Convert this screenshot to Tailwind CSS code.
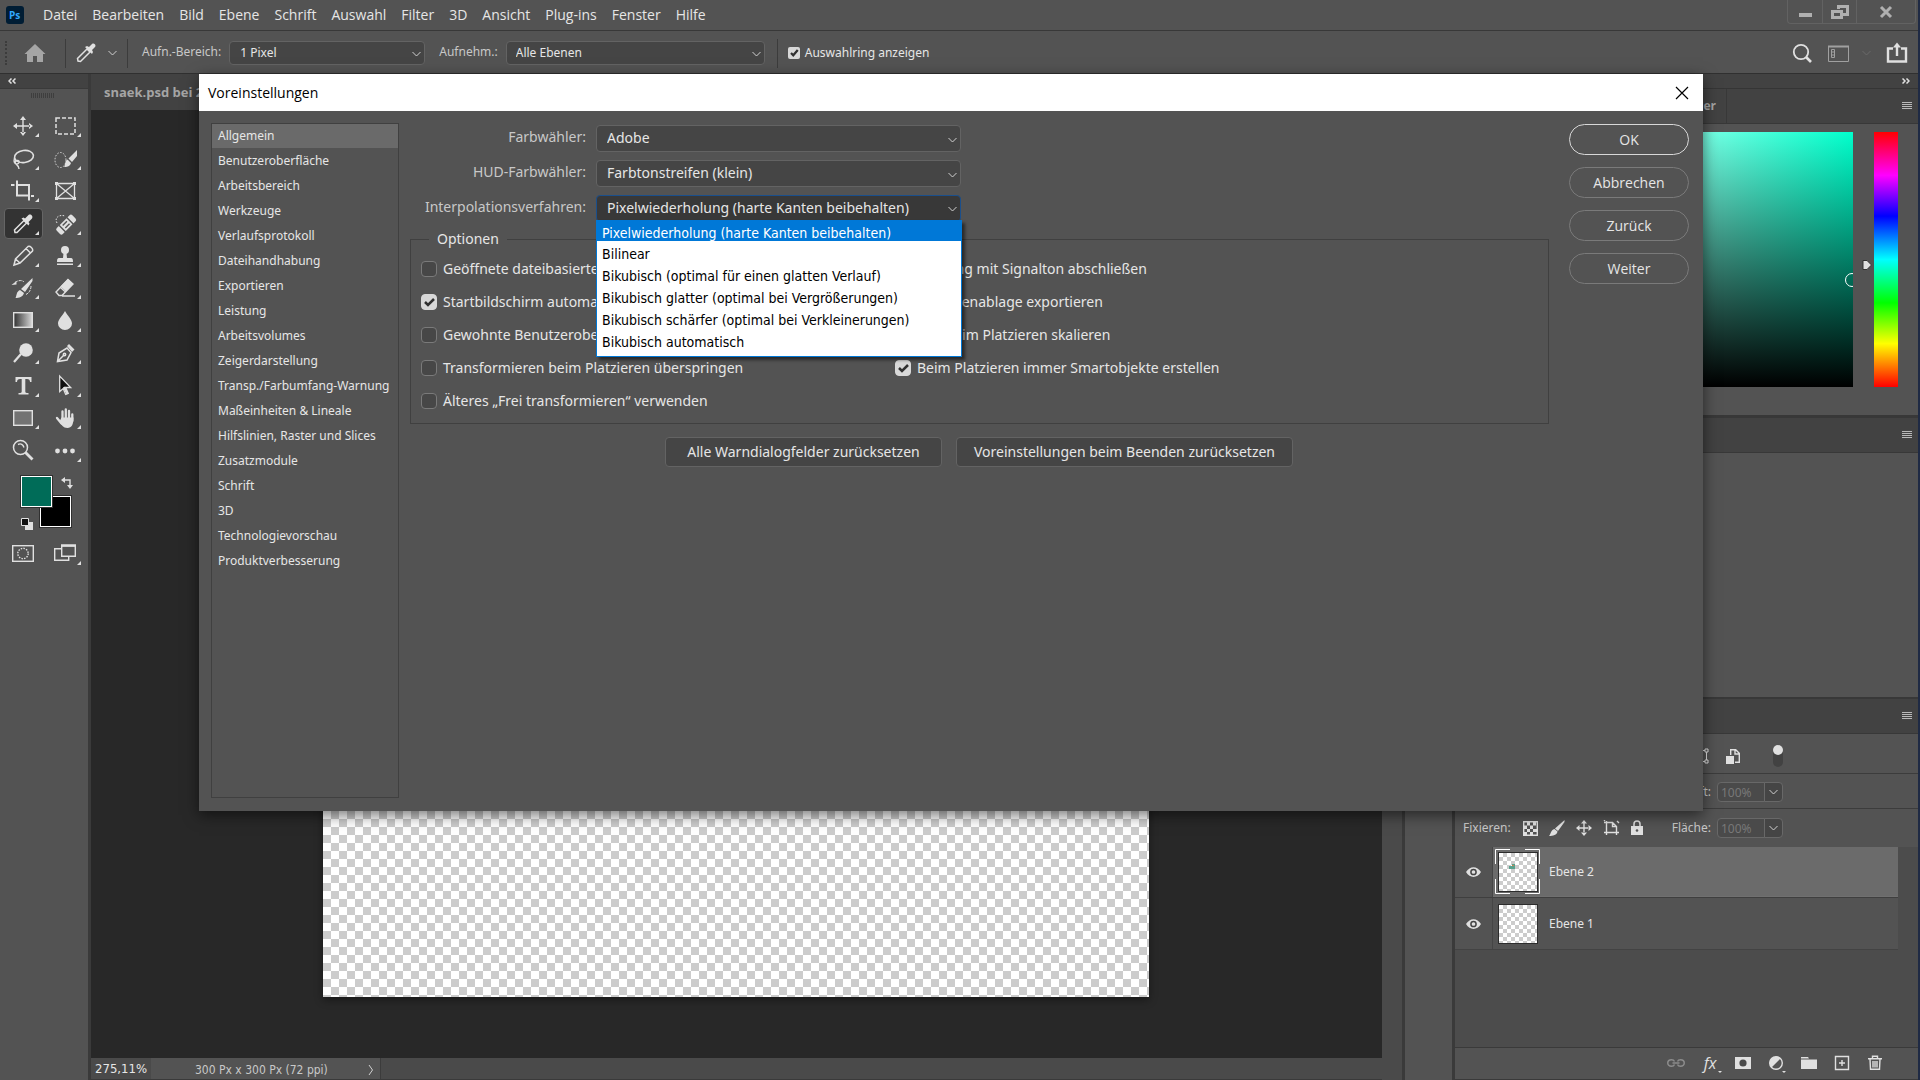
<!DOCTYPE html>
<html lang="de">

<head>
    <meta charset="utf-8">
    <title>Voreinstellungen</title>
    <script src="https://cdn.jsdelivr.net/npm/@tailwindcss/browser@4"></script>
</head>

<body class="relative flex h-screen flex-col overflow-hidden border-r-2 border-[#1f2a44] bg-[#535353] font-['Noto_Sans',sans-serif] text-xs text-[#e6e6e6]">

    <!-- menu bar -->
    <header class="flex h-[31px] shrink-0 items-center justify-between border-b border-[#383838]">
        <nav class="flex h-full items-center gap-[15px] pl-[6px] font-['Open_Sans',sans-serif] text-sm">
            <svg class="mr-1 h-[18px] w-[18px]" viewBox="0 0 18 18">
                <rect width="18" height="18" rx="3" fill="#001d34" />
                <text x="3" y="13" font-size="10" font-weight="bold" fill="#31a8ff" font-family="Open Sans">Ps</text>
            </svg>
            <a href="#">Datei</a>
            <a href="#">Bearbeiten</a>
            <a href="#">Bild</a>
            <a href="#">Ebene</a>
            <a href="#">Schrift</a>
            <a href="#">Auswahl</a>
            <a href="#">Filter</a>
            <a href="#">3D</a>
            <a href="#">Ansicht</a>
            <a href="#">Plug-ins</a>
            <a href="#">Fenster</a>
            <a href="#">Hilfe</a>
        </nav>
        <div class="mr-[2px] flex h-6 self-start rounded-b border border-t-0 border-[#626262] text-[#b0b0b0]">
            <button class="flex w-[35px] items-center justify-center border-r border-[#626262]" aria-label="Minimieren">
                <svg class="h-4 w-4" viewBox="0 0 16 16"><path d="M2 9h13v4H2z" fill="currentColor" /></svg>
            </button>
            <button class="flex w-[34px] items-center justify-center border-r border-[#626262]" aria-label="Verkleinern">
                <svg class="h-[18px] w-[18px]" viewBox="0 0 18 18" fill="none" stroke="currentColor" stroke-width="3"><path d="M7.500 6V3.500h9v8H12M1.500 8.500h9v6h-9z" /></svg>
            </button>
            <button class="flex w-[58px] items-center justify-center" aria-label="Beenden">
                <svg class="h-[14px] w-[14px]" viewBox="0 0 14 14" stroke="currentColor" stroke-width="3"><path d="M2 2l10 10M12 2L2 12" /></svg>
            </button>
        </div>
    </header>

    <!-- tool options -->
    <div class="flex h-[43px] shrink-0 items-center border-b border-[#303030] pt-[2px]">
        <div class="ml-[5px] h-[24px] border-l-2 border-dotted border-[#3c3c3c]"></div>
        <button class="ml-[17px]" aria-label="Startseite">
            <svg class="h-5 w-[22px]" viewBox="0 0 22 20" fill="#a5a5a5"><path d="M11 1L.500 11H3v8h6v-6h4v6h6v-8h2.500z" /></svg>
        </button>
        <div class="ml-[19px] h-[29px] border-l border-[#3c3c3c]"></div>
        <button class="ml-[10px]" aria-label="Pipette">
            <svg class="h-5 w-5" viewBox="0 0 20 20"><path d="M2 18l-.500-2.500L11 6l3 3-9.500 9.500z" fill="none" stroke="#e0e0e0" stroke-width="1.500" /><path d="M9 4l2-1 2 1 3-3c2-1.500 4.500 1 3 3l-3 3 1 2-1 2z" fill="#e0e0e0" /></svg>
        </button>
        <svg class="ml-3 h-[6px] w-[9px]" viewBox="0 0 9 6" fill="none" stroke="#d0d0d0"><path d="M.5 1l4 4 4-4" /></svg>
        <div class="ml-[10px] h-[29px] border-l border-[#3c3c3c]"></div>
        <label for="area" class="ml-[14px] pb-[3px] text-[#c8c8c8]">Aufn.-Bereich:</label>
        <div class="relative ml-2">
            <select id="area" class="h-6 w-[196px] appearance-none rounded-sm border border-[#636363] bg-[#454545] pl-[10px]">
                <option>1 Pixel</option>
            </select>
            <svg class="pointer-events-none absolute top-[10px] right-1 h-[6px] w-[9px]" viewBox="0 0 9 6" fill="none" stroke="#d0d0d0"><path d="M.5 1l4 4 4-4" /></svg>
        </div>
        <label for="sample" class="ml-[14px] pb-[3px] text-[#c8c8c8]">Aufnehm.:</label>
        <div class="relative ml-2">
            <select id="sample" class="h-6 w-[259px] appearance-none rounded-sm border border-[#636363] bg-[#454545] pl-[9px]">
                <option>Alle Ebenen</option>
            </select>
            <svg class="pointer-events-none absolute top-[10px] right-1 h-[6px] w-[9px]" viewBox="0 0 9 6" fill="none" stroke="#d0d0d0"><path d="M.5 1l4 4 4-4" /></svg>
        </div>
        <div class="ml-3 h-[29px] border-l border-[#3c3c3c]"></div>
        <label class="ml-[10px] flex items-center gap-[5px]">
            <span class="relative flex">
                <input type="checkbox" checked class="peer h-3 w-3 appearance-none rounded-xs bg-[#454545] checked:bg-[#d8d8d8]">
                <svg class="pointer-events-none absolute inset-0 hidden h-3 w-3 peer-checked:block" viewBox="0 0 16 16" fill="none" stroke="#303030" stroke-width="3"><path d="M4 8l3 3 6-7" /></svg>
            </span>
            Auswahlring anzeigen
        </label>
        <div class="mr-[10px] ml-auto flex items-center">
            <button aria-label="Suchen">
                <svg class="h-5 w-5" viewBox="0 0 20 20" fill="none" stroke="#e0e0e0"><circle cx="9" cy="9" r="7.200" stroke-width="1.800" /><path d="M14 14l5 5" stroke-width="2.600" /></svg>
            </button>
            <button class="ml-4" aria-label="Arbeitsbereich">
                <svg class="h-[17px] w-[21px]" viewBox="0 0 21 17" fill="none" stroke="#a0a0a0"><path d="M.5 1.500h20v15H.500z" /><path d="M0 1.500h21" stroke-width="2" /><path d="M3.500 4.500h3v8h-3zM3.500 7h3M3.500 10h3" /></svg>
            </button>
            <svg class="ml-[13px] h-[6px] w-[9px]" viewBox="0 0 9 6" fill="none" stroke="#6a6a6a"><path d="M.5 1l4 4 4-4" /></svg>
            <button class="ml-[15px]" aria-label="Teilen">
                <svg class="h-[22px] w-[22px]" viewBox="0 0 22 22" fill="none" stroke="#e0e0e0" stroke-width="2.400"><path d="M7 6.500H2v13h18v-13h-5M11 14V4" /><path d="M7 5.500L11 .500l4 5z" fill="#e0e0e0" stroke="none" /></svg>
            </button>
        </div>
    </div>

    <div class="flex min-h-0 flex-1">

        <!-- toolbox -->
        <aside class="flex w-[91px] shrink-0 flex-col border-r-[3px] border-[#3a3a3a]">
            <div class="flex h-[15px] shrink-0 items-center border-b border-[#3a3a3a] bg-[#424242] pl-2">
                <svg class="h-[6px] w-2" viewBox="0 0 8 6" fill="none" stroke="#e0e0e0" stroke-width="1.500"><path d="M3.500.5L1 3l2.500 2.500M7.500.5L5 3l2.500 2.500" /></svg>
            </div>
            <div class="mt-1 ml-[31px] h-[5px] w-6 bg-[repeating-linear-gradient(90deg,#3e3e3e_0_1px,#535353_1px_2px)]"></div>
            <div class="mt-3 grid h-[357px] w-[86px] shrink-0 grid-cols-[40px_40px] grid-rows-11 gap-x-[2px] pl-[3px] text-[#e0e0e0]">
                <button aria-label="Verschieben"><svg class="h-8 w-10" viewBox="0 0 40 32" fill="currentColor"><path d="M19.300 9h1.400v14h-1.400zM13 15.300h14v1.400H13zM20 6l3 4h-6zM20 26l3-4h-6zM10 16l4-3v6zM30 16l-4-3v6zM32 27h4v-4z" /></svg></button>
                <button aria-label="Auswahlrechteck"><svg class="h-8 w-10" viewBox="0 0 40 32" fill="none" stroke="currentColor"><rect x="11" y="8" width="19" height="16" stroke-width="1.500" stroke-dasharray="4 2" /><path d="M32 27h4v-4z" fill="currentColor" stroke="none" /></svg></button>
                <button aria-label="Lasso"><svg class="h-8 w-10" viewBox="0 0 40 32" fill="none" stroke="currentColor"><ellipse cx="21" cy="13.500" rx="9.500" ry="6" stroke-width="1.600" transform="rotate(-8 21 13.500)" /><path d="M11.500 15c-1 4 0 6 2.500 6s3-3 1-3.500-4 2-2 3.500 3 2 3 5" stroke-width="1.400" /><path d="M32 27h4v-4z" fill="currentColor" stroke="none" /></svg></button>
                <button aria-label="Schnellauswahl"><svg class="h-8 w-10" viewBox="0 0 40 32" fill="currentColor"><ellipse cx="15.500" cy="17" rx="5.500" ry="7.500" fill="none" stroke="currentColor" stroke-dasharray="1.500 1.500" /><path d="M32 7v6l-5 6-3.500-3.500zM22.500 16.500l3.500 3.500c-1 4-5 4-7 4 2-2 0-5 3.500-7.500zM32 27h4v-4z" /></svg></button>
                <button aria-label="Freistellen"><svg class="h-8 w-10" viewBox="0 0 40 32" fill="none" stroke="currentColor" stroke-width="2"><path d="M14 5.500v15h12M28 21h3M8 10h3.500M15 10h11v15.500" /><path d="M32 27h4v-4z" fill="currentColor" stroke="none" /></svg></button>
                <button aria-label="Rahmen"><svg class="h-8 w-10" viewBox="0 0 40 32" fill="none" stroke="currentColor" stroke-width="1.300"><path d="M11.500 8.500h18v15h-18zM11.500 8.500l18 15M29.500 8.500l-18 15" /><path d="M10 7h3v3h-3zM28 7h3v3h-3zM10 22h3v3h-3zM28 22h3v3h-3z" fill="currentColor" stroke="none" /></svg></button>
                <button aria-label="Pipette-Werkzeug" class="my-[1px] ml-[1px] flex w-[39px] items-center overflow-hidden rounded-sm border border-[#656565] bg-[#333333]"><svg class="-ml-[2px] h-8 w-10 shrink-0" viewBox="0 0 40 32"><path d="M12 24.500l-.500-2.500L21 12.500l2.500 2.500L14 24.500z" fill="none" stroke="#e0e0e0" stroke-width="1.500" /><path d="M18.500 10.500l2-1 1.500 1 3.500-3.500c2-1.500 5 1 3.500 3.500L25.500 14l1 1.500-1 2zM32 27h4v-4z" fill="#e0e0e0" /></svg></button>
                <button aria-label="Reparaturpinsel"><svg class="h-8 w-10" viewBox="0 0 40 32" fill="currentColor"><path d="M12 15c-3-5 2-9 8-7" fill="none" stroke="currentColor" stroke-dasharray="1.500 1.500" /><g transform="rotate(-45 21 16.500)"><rect x="10" y="12.500" width="22" height="8.500" rx="2" /><path d="M15.500 12v9.500M26.500 12v9.500M18 14.800h6M18 18.500h6" stroke="#535353" stroke-width="1.400" /></g><path d="M32 27h4v-4z" /></svg></button>
                <button aria-label="Buntstift"><svg class="h-8 w-10" viewBox="0 0 40 32" fill="none" stroke="currentColor" stroke-width="1.500"><path d="M11 25l1.500-6L25 6.500c2-1 5.500 2 4.500 4.500L17 23zM12.500 19l4.500 4M23 8.500l4.500 4.500" /><path d="M32 27h4v-4z" fill="currentColor" stroke="none" /></svg></button>
                <button aria-label="Kopierstempel"><svg class="h-8 w-10" viewBox="0 0 40 32" fill="currentColor"><circle cx="20" cy="10" r="4" /><path d="M18.500 13h3l.500 5h4c1.500 0 2 1 2 4H12c0-3 .500-4 2-4h4zM12 23.500h16V25H12zM32 27h4v-4z" /></svg></button>
                <button aria-label="Protokollpinsel"><svg class="h-8 w-10" viewBox="0 0 40 32" fill="currentColor"><path d="M29.500 6v3l-7.500 11-4-3zM17 18l4 3c-1 4-5 5-8.500 5 1.500-3 .500-6 4.500-8zM8.500 13l5-4v3.500zM32 27h4v-4z" /><path d="M12 10.500c4-3 8-2 9-.500M28 14c0 4-2 7-5 8.500" fill="none" stroke="currentColor" stroke-dasharray="3 1" /></svg></button>
                <button aria-label="Radiergummi"><svg class="h-8 w-10" viewBox="0 0 40 32" fill="currentColor"><path d="M23 7l5 5-7 7.500-5.500-5z" /><path d="M23 7.500l5 4.500L17 23.500h-3L11 20zM15 15l5.500 5M17 24h13" fill="none" stroke="currentColor" stroke-width="1.400" /><path d="M32 27h4v-4z" /></svg></button>
                <button aria-label="Verlauf"><svg class="h-8 w-10" viewBox="0 0 40 32" fill="currentColor"><defs><linearGradient id="grad"><stop stop-color="#303030" /><stop offset="1" stop-color="#d8d8d8" /></linearGradient></defs><rect x="10.700" y="7.700" width="18.600" height="14.600" fill="url(#grad)" stroke="currentColor" stroke-width="1.400" /><path d="M32 27h4v-4z" /></svg></button>
                <button aria-label="Weichzeichner"><svg class="h-8 w-10" viewBox="0 0 40 32" fill="currentColor"><path d="M20 6c3 5.500 7 8.500 7 12.500a7 6.500 0 0 1-14 0c0-4 4-7 7-12.500zM32 27h4v-4z" /></svg></button>
                <button aria-label="Abwedler"><svg class="h-8 w-10" viewBox="0 0 40 32" fill="currentColor"><circle cx="23" cy="13" r="6.800" /><path d="M18 17L11 25" stroke="currentColor" stroke-width="2.200" /><path d="M32 27h4v-4z" /></svg></button>
                <button aria-label="Zeichenstift"><svg class="h-8 w-10" viewBox="0 0 40 32" fill="none" stroke="currentColor" stroke-width="1.500"><path d="M12.500 24.500L14 16l8-5 4 4.500-4 7.500zM12.500 24.500l6-6" /><circle cx="19.500" cy="17.500" r="1.200" /><path d="M22 9l2-2 5.500 5.500-2.500 2.500zM32 27h4v-4z" fill="currentColor" stroke="none" /></svg></button>
                <button aria-label="Text"><svg class="h-8 w-10" viewBox="0 0 40 32" fill="currentColor"><path d="M12.500 7h16v5H27c0-2-1-3-3-3h-1.700v12.500c0 1 .700 1.500 3.200 1.500v1.500h-10V23c2.500 0 3.200-.500 3.200-1.500V9H17c-2 0-3 1-3 3h-1.500zM32 27h4v-4z" /></svg></button>
                <button aria-label="Pfadauswahl"><svg class="h-8 w-10" viewBox="0 0 40 32"><path d="M14.700 6v15.500l3.500-3 2.500 6 2.500-1-2.500-6h5z" fill="#101010" stroke="#e0e0e0" stroke-width="1.300" /><path d="M19 17l3.500 7" stroke="#e0e0e0" stroke-width="2.400" /><path d="M32 27h4v-4z" fill="#e0e0e0" /></svg></button>
                <button aria-label="Rechteck"><svg class="h-8 w-10" viewBox="0 0 40 32" fill="currentColor"><rect x="10.700" y="8.700" width="18.600" height="14.600" fill="#737373" stroke="currentColor" stroke-width="1.400" /><path d="M32 27h4v-4z" /></svg></button>
                <button aria-label="Hand"><svg class="h-8 w-10" viewBox="0 0 40 32"><path d="M17.500 17V9.500M20.800 16V7.500M24 17V9M27.300 19v-6.500M16.500 21.500L12 16" stroke="currentColor" stroke-width="2.300" stroke-linecap="round" /><path d="M16.500 15.500h12c0 7-2 10.500-6 10.500-4.500 0-6-3-8-6.500zM32 27h4v-4z" fill="currentColor" /></svg></button>
                <button aria-label="Zoom"><svg class="h-8 w-10" viewBox="0 0 40 32" fill="none" stroke="currentColor"><circle cx="17.500" cy="12.500" r="7" stroke-width="1.500" /><path d="M15 9.500c3-1.500 5 0 6 3" stroke-width="1.400" /><path d="M22.500 17.500l7 7" stroke-width="2.800" /></svg></button>
                <button aria-label="Symbolleiste bearbeiten"><svg class="h-8 w-10" viewBox="0 0 40 32" fill="currentColor"><circle cx="12.500" cy="16" r="2.400" /><circle cx="20" cy="16" r="2.400" /><circle cx="27.500" cy="16" r="2.400" /><path d="M32 27h4v-4z" /></svg></button>
            </div>
            <div class="relative mt-[8px] h-[56px] shrink-0">
                <button class="absolute top-[21px] left-[40px] h-[31px] w-[31px] border border-white bg-black outline outline-[#303030]" aria-label="Hintergrundfarbe"></button>
                <button class="absolute top-[1px] left-[21px] h-[31px] w-[31px] border border-white bg-[#006c58] outline outline-[#303030]" aria-label="Vordergrundfarbe"></button>
                <svg class="absolute top-[2px] left-[61px] h-3 w-3" viewBox="0 0 12 12" fill="#e0e0e0"><path d="M0 3l4-3v6zM6 8h6l-3 4zM3 2.300h6.700V9H8.300V3.700H3z" /></svg>
                <svg class="absolute top-[43px] left-[21px] h-3 w-3" viewBox="0 0 12 12"><path d="M4 4h8v8H4z" fill="#e0e0e0" /><path d="M.5.500h7v7h-7z" fill="#111" stroke="#e0e0e0" /></svg>
            </div>
            <div class="mt-[7px] flex gap-[2px] pl-[3px] text-[#e0e0e0]">
                <button aria-label="Maskierungsmodus"><svg class="h-8 w-10" viewBox="0 0 40 32" fill="none" stroke="currentColor"><rect x="9.700" y="7.700" width="20.600" height="15.600" stroke-width="1.400" /><circle cx="20" cy="15.500" r="5.200" stroke-width="1.400" stroke-dasharray="1.500 1.200" /></svg></button>
                <button aria-label="Bildschirmmodus"><svg class="h-8 w-10" viewBox="0 0 40 32" fill="none" stroke="currentColor" stroke-width="1.400"><path d="M16 10.700H9.700v11.600h14V19" /><path d="M16.700 7.700h13.600v10.600H16.700z" /><path d="M16 7.500h15" stroke-width="2.500" /><path d="M32 27h4v-4z" fill="currentColor" stroke="none" /></svg></button>
            </div>
        </aside>

        <!-- document window -->
        <main class="flex min-w-0 flex-1 flex-col bg-[#282828]">
            <div class="flex h-9 shrink-0 items-center bg-[#424242] pt-[2px] pl-[13px] font-['Open_Sans',sans-serif] text-[13px] font-bold text-[#a5a5a5]">snaek.psd bei 275% (Ebene 2, RGB/8#)</div>
            <div class="grid min-h-0 flex-1 place-items-center pr-px">
                <div class="h-[826px] w-[826px] bg-[conic-gradient(#ccc_25%,#fff_0_50%,#ccc_0_75%,#fff_0)] bg-[length:16px_16px] shadow-[0_3px_8px_rgba(0,0,0,0.4)]"></div>
            </div>
            <div class="flex h-[22px] shrink-0 items-center border-b border-[#3a3a3a] bg-[#4a4a4a] font-['DejaVu_Sans_Condensed','DejaVu_Sans',sans-serif]">
                <span class="w-[60px] pl-1 text-[13px]">275,11%</span>
                <div class="flex h-full w-[230px] items-center justify-between border-r border-[#3c3c3c] bg-[#535353] pt-[2px] pr-[6px] pl-11 text-[#c8c8c8]">
                    <span>300 Px x 300 Px (72 ppi)</span>
                    <svg class="h-3 w-[6px]" viewBox="0 0 6 12" fill="none" stroke="#d0d0d0"><path d="M1 1l3.500 5L1 11" /></svg>
                </div>
            </div>
        </main>
        <div class="w-5 shrink-0 bg-[#4a4a4a]"></div>
        <div class="w-[53px] shrink-0 border-x-[3px] border-[#3a3a3a]">
            <div class="h-[15px] bg-[#424242]"></div>
        </div>

        <!-- panels -->
        <aside class="flex w-[463px] shrink-0 flex-col border-b border-[#3a3a3a]">
            <div class="flex h-[15px] shrink-0 items-center justify-end border-b border-[#353535] bg-[#424242] pr-2">
                <svg class="h-[6px] w-2" viewBox="0 0 8 6" fill="none" stroke="#e0e0e0" stroke-width="1.500"><path d="M.5.5L3 3 .5 5.500M4.500.5L7 3 4.500 5.500" /></svg>
            </div>
            <div class="flex h-[35px] shrink-0 items-center border-b border-[#383838] bg-[#424242]">
                <div class="flex h-full w-[272px] items-center justify-end border-r border-[#383838] pr-[10px] font-['Open_Sans',sans-serif] font-bold text-[#a5a5a5]">Farbfelder</div>
                <button class="mr-[6px] ml-auto" aria-label="Farbmenü"><svg class="h-[8px] w-[10px]" viewBox="0 0 10 8" stroke="#b8b8b8"><path d="M0 .5h10M0 2.500h10M0 4.500h10M0 6.500h10" /></svg></button>
            </div>
            <div class="flex h-[291px] shrink-0 pt-2 pr-5 pl-[78px]">
                <div class="relative h-[255px] flex-1 overflow-hidden bg-[linear-gradient(90deg,#fff,#00ffcc)]">
                    <div class="h-full bg-[linear-gradient(transparent,#000)]"></div>
                    <div class="absolute top-[141px] -right-[6px] h-[14px] w-[14px] rounded-full border border-white"></div>
                </div>
                <svg class="mt-[128px] h-[10px] w-[21px]" viewBox="0 0 21 10"><path d="M10 .500h4l4.500 4.500L14 9.500h-4z" fill="#e0e0e0" stroke="#333" /></svg>
                <div class="h-[255px] w-6 bg-[linear-gradient(#f00,#f0f_17%,#00f_33%,#0ff_50%,#0f0_67%,#ff0_83%,#f00)]"></div>
            </div>
            <div class="flex h-[38px] shrink-0 items-center justify-end border-y border-t-[3px] border-[#383838] bg-[#424242] pr-[6px]">
                <button aria-label="Eigenschaftenmenü"><svg class="h-[8px] w-[10px]" viewBox="0 0 10 8" stroke="#b8b8b8"><path d="M0 .5h10M0 2.500h10M0 4.500h10M0 6.500h10" /></svg></button>
            </div>
            <div class="h-[244px] shrink-0"></div>
            <div class="flex h-[37px] shrink-0 items-center justify-end border-y border-t-2 border-[#383838] bg-[#424242] pr-[6px]">
                <button aria-label="Ebenenmenü"><svg class="h-[8px] w-[10px]" viewBox="0 0 10 8" stroke="#b8b8b8"><path d="M0 .5h10M0 2.500h10M0 4.500h10M0 6.500h10" /></svg></button>
            </div>
            <div class="flex h-10 shrink-0 items-center border-b border-[#3c3c3c] pt-[5px] pl-[240px] text-[#e0e0e0]">
                <svg class="h-4 w-[14px]" viewBox="0 0 14 16" fill="none" stroke="currentColor"><path d="M2.500 4v8M11.500 4v8M4 2.500h6M4 13.500h6M1 1h3v3H1zM10 1h3v3h-3zM1 12h3v3H1zM10 12h3v3h-3z" /></svg>
                <svg class="ml-[17px] h-4 w-[14px]" viewBox="0 0 14 16"><path d="M4.700 7V1.700h5l3.600 3.600v9H9M9 2v4h4" fill="none" stroke="currentColor" stroke-width="1.400" /><path d="M0 8h8v8H0z" fill="currentColor" /></svg>
                <button class="ml-[33px] flex h-[22px] w-[10px] items-start rounded-full bg-[#424242]" aria-label="Ebenenfilterung"><span class="block h-[10px] w-[10px] rounded-full bg-[#e0e0e0]"></span></button>
            </div>
            <div class="flex h-[35px] shrink-0 items-center justify-end border-b border-[#3c3c3c] pt-[2px] pr-[135px]">
                <label for="opacity" class="mr-[6px] text-[#c8c8c8]">Deckkraft:</label>
                <input id="opacity" value="100%" class="h-5 w-12 rounded-l-sm border border-[#686868] bg-[#4a4a4a] pl-[3px] text-[#787878]">
                <button class="-ml-px flex h-5 w-[19px] items-center justify-center rounded-r-sm border border-[#686868] bg-[#454545]" aria-label="Deckkraft wählen"><svg class="h-[6px] w-[9px]" viewBox="0 0 9 6" fill="none" stroke="#d0d0d0"><path d="M.5 1l4 4 4-4" /></svg></button>
            </div>
            <div class="flex h-[38px] shrink-0 items-center pr-[135px] pl-2">
                <span class="w-[60px] text-[#c8c8c8]">Fixieren:</span>
                <div class="flex items-center gap-[11px] text-[#e0e0e0]">
                    <button aria-label="Transparente Pixel fixieren"><svg class="h-[15px] w-[15px]" viewBox="0 0 15 15" fill="currentColor"><path d="M.700.700h13.600v13.600H.700z" fill="none" stroke="currentColor" stroke-width="1.400" /><path d="M4 1h3v3.500H4zM10 1h3v3.500h-3zM1 4.500h3V8H1zM7 4.500h3V8H7zM4 8h3v3H4zM10 8h4v3h-4zM1 11h3v3H1zM7 11h3v3H7z" /></svg></button>
                    <button aria-label="Bildpixel fixieren"><svg class="h-4 w-4" viewBox="0 0 16 16" fill="currentColor"><path d="M15.500 0v2L9 11 6 8.500zM5.500 9l3 2.500C8 15 4 16 0 16c2-2 1.500-6 5.500-7z" /></svg></button>
                    <button aria-label="Position fixieren"><svg class="h-4 w-4" viewBox="0 0 16 16" fill="currentColor"><path d="M7.300 3h1.400v10H7.300zM3 7.300h10v1.400H3zM8 0l3 3.500H5zM8 16l3-3.500H5zM0 8l3.500-3v6zM16 8l-3.500-3v6z" /></svg></button>
                    <button aria-label="Zeichenfläche fixieren"><svg class="h-4 w-[17px]" viewBox="0 0 17 16" fill="none" stroke="currentColor" stroke-width="1.400"><path d="M3.500 1v14M1 12.500h15M1 2.500h8.500l4 4V15M9.500 3v3.500H13M14 1l2 2M1 0l1 1" /></svg></button>
                    <button aria-label="Alle sperren"><svg class="h-4 w-3" viewBox="0 0 12 16"><path d="M3 7V4c0-4 6-4 6 0v3" fill="none" stroke="currentColor" stroke-width="1.500" /><path d="M0 6h12v9H0z" fill="currentColor" /><circle cx="6" cy="10.500" r="1.300" fill="#535353" /></svg></button>
                </div>
                <label for="fill" class="mr-[6px] ml-auto text-[#c8c8c8]">Fläche:</label>
                <input id="fill" value="100%" class="h-5 w-12 rounded-l-sm border border-[#686868] bg-[#4a4a4a] pl-[3px] text-[#787878]">
                <button class="-ml-px flex h-5 w-[19px] items-center justify-center rounded-r-sm border border-[#686868] bg-[#454545]" aria-label="Fläche wählen"><svg class="h-[6px] w-[9px]" viewBox="0 0 9 6" fill="none" stroke="#d0d0d0"><path d="M.5 1l4 4 4-4" /></svg></button>
            </div>
            <div class="min-h-0 flex-1 bg-[#4c4c4c] pr-5">
                <div class="flex h-[51px] border-b border-[#3f3f3f] bg-[#535353]">
                    <button class="flex w-[38px] items-center justify-center border-r border-[#454545]" aria-label="Ebene 2 ausblenden"><svg class="h-[10px] w-[15px]" viewBox="0 0 15 10"><path d="M0 5c4-6.500 11-6.500 15 0-4 6.500-11 6.500-15 0z" fill="#e0e0e0" /><circle cx="7.500" cy="5" r="2.600" fill="none" stroke="#444" stroke-width="1.500" /></svg></button>
                    <div class="flex flex-1 items-center gap-[9px] border-b border-[#707070] bg-[#6b6b6b] pl-[2px]">
                        <div class="relative flex h-[45px] w-[45px] items-center justify-center">
                            <svg class="absolute inset-0 h-[45px] w-[45px]" viewBox="0 0 45 45" fill="none" stroke="#fff"><path d="M15 .5H.500V15M30 .5h14.500V15M15 44.500H.500V30M30 44.500h14.500V30" /></svg>
                            <div class="h-10 w-10 border border-[#2c2c2c] bg-[conic-gradient(#ccc_25%,#fff_0_50%,#ccc_0_75%,#fff_0)] bg-[length:8px_8px] pt-[11px] pl-[10px]"><svg class="h-[5px] w-[6px]" viewBox="0 0 6 5"><path d="M0 2h3V0h3v5H0z" fill="#58a08c" /><path d="M3 1h2v1H3z" fill="#d08050" /></svg></div>
                        </div>
                        <span>Ebene 2</span>
                    </div>
                </div>
                <div class="flex h-[52px] border-b border-[#434343] bg-[#535353]">
                    <button class="flex w-[38px] items-center justify-center border-r border-[#454545]" aria-label="Ebene 1 ausblenden"><svg class="h-[10px] w-[15px]" viewBox="0 0 15 10"><path d="M0 5c4-6.500 11-6.500 15 0-4 6.500-11 6.500-15 0z" fill="#e0e0e0" /><circle cx="7.500" cy="5" r="2.600" fill="none" stroke="#444" stroke-width="1.500" /></svg></button>
                    <div class="flex flex-1 items-center gap-[9px] pl-[2px]">
                        <div class="flex h-[45px] w-[45px] items-center justify-center">
                            <div class="h-10 w-10 border border-[#2c2c2c] bg-[conic-gradient(#ccc_25%,#fff_0_50%,#ccc_0_75%,#fff_0)] bg-[length:8px_8px]"></div>
                        </div>
                        <span>Ebene 1</span>
                    </div>
                </div>
            </div>
            <div class="flex h-8 shrink-0 items-center justify-end gap-[17px] border-t border-[#3a3a3a] pr-[35px] pb-px text-[#e0e0e0]">
                <button aria-label="Ebenen verbinden"><svg class="h-4 w-[18px]" viewBox="0 0 18 16" fill="none" stroke="#8c8c8c" stroke-width="1.500"><path d="M7.500 6.500C7 5.300 6 4.700 4.500 4.700c-5 0-5 6.600 0 6.600 1.500 0 2.500-.600 3-1.800M10.500 6.500c.5-1.200 1.500-1.800 3-1.800 5 0 5 6.600 0 6.600-1.500 0-2.500-.600-3-1.800M5.500 8h7" /></svg></button>
                <button class="relative w-4 font-['Open_Sans',sans-serif] text-base leading-4 italic" aria-label="Ebenenstil">fx<svg class="absolute right-[-4px] bottom-[-2px] h-[2px] w-1" viewBox="0 0 4 2" fill="currentColor"><path d="M0 0h4L2 2z" /></svg></button>
                <button aria-label="Maske hinzufügen"><svg class="h-4 w-4" viewBox="0 0 16 16"><path d="M0 2h16v12H0z" fill="currentColor" /><circle cx="8" cy="8" r="3.600" fill="#4a4a4a" /></svg></button>
                <button class="relative" aria-label="Einstellungsebene"><svg class="h-4 w-4" viewBox="0 0 16 16"><circle cx="8" cy="8" r="6.300" fill="none" stroke="currentColor" stroke-width="1.400" /><path d="M12.500 3.500A6.300 6.300 0 0 0 3.500 12.500z" fill="currentColor" /></svg><svg class="absolute right-[-2px] bottom-[-2px] h-[2px] w-1" viewBox="0 0 4 2" fill="currentColor"><path d="M0 0h4L2 2z" /></svg></button>
                <button aria-label="Neue Gruppe"><svg class="h-4 w-4" viewBox="0 0 16 16" fill="currentColor"><path d="M0 2h7l1 1.500H0zM0 4.500h16V14H0z" /></svg></button>
                <button aria-label="Neue Ebene"><svg class="h-4 w-4" viewBox="0 0 16 16" fill="none" stroke="currentColor" stroke-width="1.400"><path d="M1.500 1.500h13v13h-13zM8 5v6M5 8h6" /></svg></button>
                <button aria-label="Ebene löschen"><svg class="h-4 w-4" viewBox="0 0 16 16" fill="none" stroke="currentColor" stroke-width="1.400"><path d="M1 3.700h14M5.500 3.500V1.200h5v2.300M3 4l.500 10.300h9L13 4M6 6v6.500M8 6v6.500M10 6v6.500" /></svg></button>
            </div>
        </aside>
    </div>

    <!-- preferences dialog -->
    <section role="dialog" aria-labelledby="dialog-title" class="absolute top-[74px] right-[215px] left-[199px] bg-[#535353] shadow-[0_4px_14px_rgba(0,0,0,0.55)]">
        <div class="flex h-[37px] items-center justify-between bg-white pr-[14px] pl-[9px] text-black">
            <h1 id="dialog-title" class="font-['Open_Sans',sans-serif] text-sm">Voreinstellungen</h1>
            <button aria-label="Schließen"><svg class="h-[14px] w-[14px]" viewBox="0 0 14 14" stroke="currentColor" stroke-width="1.200"><path d="M1 1l12 12M13 1L1 13" /></svg></button>
        </div>
        <div class="flex pt-3 pr-[14px] pb-[13px] pl-3">
            <ul class="h-[675px] w-[188px] shrink-0 border border-[#404040] leading-[25px] [&>li]:pl-[6px]">
                <li class="bg-[#6a6a6a] leading-6">Allgemein</li>
                <li>Benutzeroberfläche</li>
                <li>Arbeitsbereich</li>
                <li>Werkzeuge</li>
                <li>Verlaufsprotokoll</li>
                <li>Dateihandhabung</li>
                <li>Exportieren</li>
                <li>Leistung</li>
                <li>Arbeitsvolumes</li>
                <li>Zeigerdarstellung</li>
                <li>Transp./Farbumfang-Warnung</li>
                <li>Maßeinheiten &amp; Lineale</li>
                <li>Hilfslinien, Raster und Slices</li>
                <li>Zusatzmodule</li>
                <li>Schrift</li>
                <li>3D</li>
                <li>Technologievorschau</li>
                <li>Produktverbesserung</li>
            </ul>

            <div class="ml-[11px] min-w-0 flex-1 text-sm">
                <div class="grid grid-cols-[176px_365px] items-center gap-x-[10px] gap-y-2 pt-[2px]">
                    <label for="picker" class="pb-1 text-right text-[#c8c8c8]">Farbwähler:</label>
                    <div class="relative">
                        <select id="picker" class="block h-[27px] w-full appearance-none rounded-sm border border-[#636363] bg-[#454545] pb-[2px] pl-[10px]">
                            <option>Adobe</option>
                        </select>
                        <svg class="pointer-events-none absolute top-[12px] right-1 h-[6px] w-[9px]" viewBox="0 0 9 6" fill="none" stroke="#d0d0d0"><path d="M.5 1l4 4 4-4" /></svg>
                    </div>
                    <label for="hud" class="pb-1 text-right text-[#c8c8c8]">HUD-Farbwähler:</label>
                    <div class="relative">
                        <select id="hud" class="block h-[27px] w-full appearance-none rounded-sm border border-[#636363] bg-[#454545] pb-[2px] pl-[10px]">
                            <option>Farbtonstreifen (klein)</option>
                        </select>
                        <svg class="pointer-events-none absolute top-[12px] right-1 h-[6px] w-[9px]" viewBox="0 0 9 6" fill="none" stroke="#d0d0d0"><path d="M.5 1l4 4 4-4" /></svg>
                    </div>
                    <label for="interpolation" class="pb-1 text-right text-[#c8c8c8]">Interpolationsverfahren:</label>
                    <div class="relative">
                        <select id="interpolation" class="block h-[27px] w-full appearance-none rounded-sm border border-[#1a4f8c] bg-[#383838] pb-[2px] pl-[10px]">
                            <option>Pixelwiederholung (harte Kanten beibehalten)</option>
                        </select>
                        <svg class="pointer-events-none absolute top-[11px] right-1 h-[6px] w-[9px]" viewBox="0 0 9 6" fill="none" stroke="#d0d0d0"><path d="M.5 1l4 4 4-4" /></svg>
                        <ul role="listbox" aria-label="Interpolationsverfahren" class="absolute top-[25px] left-0 z-10 w-[366px] border border-[#0078d7] bg-white pb-[3px] font-['DejaVu_Sans_Condensed','DejaVu_Sans',sans-serif] leading-[22px] text-black shadow-[3px_3px_3px_rgba(0,0,0,0.5)] [&>li]:pl-[5px]">
                            <li role="option" aria-selected="true" class="mb-[2px] h-5 overflow-hidden bg-[#0078d7] leading-[25px] text-white">Pixelwiederholung (harte Kanten beibehalten)</li>
                            <li role="option">Bilinear</li>
                            <li role="option">Bikubisch (optimal für einen glatten Verlauf)</li>
                            <li role="option">Bikubisch glatter (optimal bei Vergrößerungen)</li>
                            <li role="option">Bikubisch schärfer (optimal bei Verkleinerungen)</li>
                            <li role="option">Bikubisch automatisch</li>
                        </ul>
                    </div>
                </div>

                <fieldset class="mt-[7px] mr-[-1px] border border-[#404040] pb-[6px] pl-[10px]">
                    <legend class="ml-2 px-2 leading-5">Optionen</legend>
                    <div class="grid grid-cols-[474px_1fr] pt-[3px] [&>label]:flex [&>label]:h-[33px] [&>label]:items-center [&>label]:gap-[6px]">
                        <label>
                            <span class="relative flex"><input type="checkbox" class="peer h-4 w-4 appearance-none rounded-sm border border-[#7a7a7a] bg-[#474747] checked:border-[#d8d8d8] checked:bg-[#d8d8d8]"><svg class="pointer-events-none absolute inset-0 hidden h-4 w-4 peer-checked:block" viewBox="0 0 16 16" fill="none" stroke="#303030" stroke-width="2.500"><path d="M4 8l3 3 6-6" /></svg></span>
                            Geöffnete dateibasierte Dokumente automatisch aktualisieren
                        </label>
                        <label>
                            <span class="relative flex"><input type="checkbox" class="peer h-4 w-4 appearance-none rounded-sm border border-[#7a7a7a] bg-[#474747] checked:border-[#d8d8d8] checked:bg-[#d8d8d8]"><svg class="pointer-events-none absolute inset-0 hidden h-4 w-4 peer-checked:block" viewBox="0 0 16 16" fill="none" stroke="#303030" stroke-width="2.500"><path d="M4 8l3 3 6-6" /></svg></span>
                            Vorgang mit Signalton abschließen
                        </label>
                        <label>
                            <span class="relative flex"><input type="checkbox" checked class="peer h-4 w-4 appearance-none rounded-sm border border-[#7a7a7a] bg-[#474747] checked:border-[#d8d8d8] checked:bg-[#d8d8d8]"><svg class="pointer-events-none absolute inset-0 hidden h-4 w-4 peer-checked:block" viewBox="0 0 16 16" fill="none" stroke="#303030" stroke-width="2.500"><path d="M4 8l3 3 6-6" /></svg></span>
                            Startbildschirm automatisch anzeigen
                        </label>
                        <label>
                            <span class="relative flex"><input type="checkbox" checked class="peer h-4 w-4 appearance-none rounded-sm border border-[#7a7a7a] bg-[#474747] checked:border-[#d8d8d8] checked:bg-[#d8d8d8]"><svg class="pointer-events-none absolute inset-0 hidden h-4 w-4 peer-checked:block" viewBox="0 0 16 16" fill="none" stroke="#303030" stroke-width="2.500"><path d="M4 8l3 3 6-6" /></svg></span>
                            Zwischenablage exportieren
                        </label>
                        <label>
                            <span class="relative flex"><input type="checkbox" class="peer h-4 w-4 appearance-none rounded-sm border border-[#7a7a7a] bg-[#474747] checked:border-[#d8d8d8] checked:bg-[#d8d8d8]"><svg class="pointer-events-none absolute inset-0 hidden h-4 w-4 peer-checked:block" viewBox="0 0 16 16" fill="none" stroke="#303030" stroke-width="2.500"><path d="M4 8l3 3 6-6" /></svg></span>
                            Gewohnte Benutzeroberfläche verwenden
                        </label>
                        <label>
                            <span class="relative flex"><input type="checkbox" checked class="peer h-4 w-4 appearance-none rounded-sm border border-[#7a7a7a] bg-[#474747] checked:border-[#d8d8d8] checked:bg-[#d8d8d8]"><svg class="pointer-events-none absolute inset-0 hidden h-4 w-4 peer-checked:block" viewBox="0 0 16 16" fill="none" stroke="#303030" stroke-width="2.500"><path d="M4 8l3 3 6-6" /></svg></span>
                            Bild beim Platzieren skalieren
                        </label>
                        <label>
                            <span class="relative flex"><input type="checkbox" class="peer h-4 w-4 appearance-none rounded-sm border border-[#7a7a7a] bg-[#474747] checked:border-[#d8d8d8] checked:bg-[#d8d8d8]"><svg class="pointer-events-none absolute inset-0 hidden h-4 w-4 peer-checked:block" viewBox="0 0 16 16" fill="none" stroke="#303030" stroke-width="2.500"><path d="M4 8l3 3 6-6" /></svg></span>
                            Transformieren beim Platzieren überspringen
                        </label>
                        <label>
                            <span class="relative flex"><input type="checkbox" checked class="peer h-4 w-4 appearance-none rounded-sm border border-[#7a7a7a] bg-[#474747] checked:border-[#d8d8d8] checked:bg-[#d8d8d8]"><svg class="pointer-events-none absolute inset-0 hidden h-4 w-4 peer-checked:block" viewBox="0 0 16 16" fill="none" stroke="#303030" stroke-width="2.500"><path d="M4 8l3 3 6-6" /></svg></span>
                            Beim Platzieren immer Smartobjekte erstellen
                        </label>
                        <label>
                            <span class="relative flex"><input type="checkbox" class="peer h-4 w-4 appearance-none rounded-sm border border-[#7a7a7a] bg-[#474747] checked:border-[#d8d8d8] checked:bg-[#d8d8d8]"><svg class="pointer-events-none absolute inset-0 hidden h-4 w-4 peer-checked:block" viewBox="0 0 16 16" fill="none" stroke="#303030" stroke-width="2.500"><path d="M4 8l3 3 6-6" /></svg></span>
                            Älteres „Frei transformieren“ verwenden
                        </label>
                    </div>
                </fieldset>

                <div class="mt-[13px] flex justify-center gap-[14px]">
                    <button class="h-[30px] w-[277px] rounded-sm border border-[#636363] bg-[#454545]">Alle Warndialogfelder zurücksetzen</button>
                    <button class="h-[30px] w-[337px] rounded-sm border border-[#636363] bg-[#454545]">Voreinstellungen beim Beenden zurücksetzen</button>
                </div>
            </div>

            <div class="mt-px ml-[21px] flex w-[120px] shrink-0 flex-col gap-3 font-['Open_Sans',sans-serif] text-sm">
                <button class="h-[31px] rounded-full border border-[#d8d8d8]">OK</button>
                <button class="h-[31px] rounded-full border border-[#7a7a7a]">Abbrechen</button>
                <button class="h-[31px] rounded-full border border-[#7a7a7a]">Zurück</button>
                <button class="h-[31px] rounded-full border border-[#7a7a7a]">Weiter</button>
            </div>
        </div>
    </section>

    <div class="absolute top-[840px] -right-[2px] h-[21px] w-[2px] bg-white"></div>
</body>

</html>
